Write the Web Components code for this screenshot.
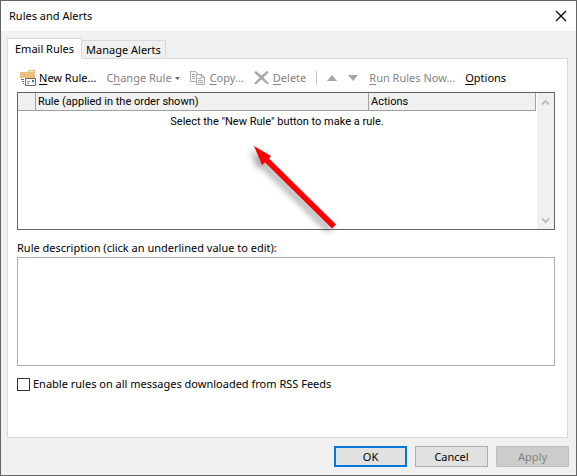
<!DOCTYPE html>
<html lang="en">
<head>
<meta charset="utf-8">
<title>Rules and Alerts</title>
<style>
  body {
    margin: 0;
    font: 11px/16px 'Noto Sans', 'Open Sans', sans-serif;
    color: #000;
  }
</style>
</head>
<body>
<rules-dialog></rules-dialog>

<script>
class ToolButton extends HTMLElement {
  constructor() {
    super();

    this.attachShadow({ mode: 'open' });

    this.shadowRoot.innerHTML = `
      <style>
        :host {
          display: block;
        }
        button {
          display: flex;
          align-items: center;
          gap: 3px;
          height: 20px;
          padding: 0;
          border: 0;
          background: none;
          font: inherit;
          color: #000;
          white-space: nowrap;
        }
        button:disabled {
          color: #838383;
        }
      </style>
      <button ${this.hasAttribute('disabled') ? 'disabled' : ''} aria-label="${this.getAttribute('label') || ''}">
        <slot name="icon"></slot><slot></slot><slot name="arrow"></slot>
      </button>
    `;
  }
}

class DialogButton extends HTMLElement {
  constructor() {
    super();

    this.attachShadow({ mode: 'open' });

    this.shadowRoot.innerHTML = `
      <style>
        :host {
          display: block;
          width: 73px;
        }
        button {
          width: 100%;
          height: 21px;
          padding: 0;
          border: 1px solid #adadad;
          background: #e1e1e1;
          font: inherit;
          line-height: 18px;
          color: #000;
        }
        :host([primary]) button {
          border: 2px solid #0078d7;
          line-height: 16px;
        }
        button:disabled {
          border-color: #bfbfbf;
          background: #ccc;
          color: #838383;
        }
      </style>
      <button ${this.hasAttribute('disabled') ? 'disabled' : ''}><slot></slot></button>
    `;
  }
}

class TitleBar extends HTMLElement {
  constructor() {
    super();

    this.attachShadow({ mode: 'open' });

    this.shadowRoot.innerHTML = `
      <style>
        :host {
          display: flex;
          align-items: center;
          justify-content: space-between;
          height: 30px;
          padding: 0 9px 0 8px;
          background: #fff;
        }
        h1 {
          margin: 0;
          font-size: 11px;
          font-weight: 400;
        }
        button {
          display: flex;
          padding: 0;
          border: 0;
          background: none;
        }
      </style>
      <h1><slot></slot></h1>
      <button aria-label="Close">
        <svg width="12" height="12" viewBox="0 0 12 12"><path d="M1 1l10 10M11 1L1 11" stroke="#000" stroke-width="1.2"/></svg>
      </button>
    `;
  }
}

class TabStrip extends HTMLElement {
  constructor() {
    super();

    this.attachShadow({ mode: 'open' });

    this.shadowRoot.innerHTML = `
      <style>
        :host {
          display: flex;
          align-items: flex-end;
          height: 21px;
          margin-bottom: -1px;
          position: relative;
        }
        button {
          height: 19px;
          padding: 0 4px;
          border: 1px solid #d9d9d9;
          border-left: 0;
          background: #f0f0f0;
          font: inherit;
          color: #000;
          line-height: 16px;
        }
        button[aria-selected="true"] {
          height: 21px;
          padding: 0 7px;
          border-left: 1px solid #d9d9d9;
          border-bottom-color: #fff;
          background: #fff;
        }
      </style>
      <button role="tab" aria-selected="true">Email Rules</button>
      <button role="tab" aria-selected="false">Manage Alerts</button>
    `;
    this.setAttribute('role', 'tablist');
  }
}

class RuleToolbar extends HTMLElement {
  constructor() {
    super();

    this.attachShadow({ mode: 'open' });

    this.shadowRoot.innerHTML = `
      <style>
        :host {
          display: flex;
          align-items: center;
          gap: 10px;
          padding: 0 3px;
        }
        svg {
          display: block;
        }
        u {
          text-underline-offset: 2px;
        }
        .line {
          width: 1px;
          height: 14px;
          background: #c6c6c6;
        }
      </style>
      <tool-button label="New Rule...">
        <svg slot="icon" width="16" height="16" viewBox="0 0 16 16">
          <path d="M0 2h7l2-2h6v8H0z" fill="#e8bf7c"/>
          <path d="M9 1.500h5" stroke="#f6e3c3"/>
          <path d="M1 9.500h3M2 11.500h2M3 13.500h1" stroke="#666"/>
          <path d="M5.500 8.500h10v7h-10z" fill="#fff" stroke="#666"/>
          <path d="M7 11.500h3M7 13.500h2" stroke="#888"/>
          <path d="M12 10h2v2h-2z" fill="#2b6cb0"/>
        </svg>
        <span><u>N</u>ew Rule...</span>
      </tool-button>
      <tool-button disabled label="Change Rule">
        <span>C<u>h</u>ange Rule</span>
        <svg slot="arrow" width="5" height="3" viewBox="0 0 5 3"><path d="M0 0h5L2.500 3z" fill="#666"/></svg>
      </tool-button>
      <tool-button disabled label="Copy...">
        <svg slot="icon" width="17" height="16" viewBox="0 0 17 16">
          <g fill="#f7f7f7" stroke="#aaa">
            <path d="M.5 1.500h5l2 2v8h-7z"/>
            <path d="M6.500 4.500h5l3 3v7h-8z"/>
            <path d="M11.500 4.500v3h3M2 4.500h3M2 6.500h3M2 8.500h3M8 8.500h3M8 10.500h5M8 12.500h5" fill="none"/>
          </g>
        </svg>
        <span><u>C</u>opy...</span>
      </tool-button>
      <tool-button disabled label="Delete">
        <svg slot="icon" width="16" height="14" viewBox="0 0 16 14">
          <path d="M0 1.500L2 0l5.500 4.500L13 0l2 1-5.500 5.500 5.500 6-1.500 1L7.500 8.500 2 13.500l-2-1 5.500-6z" fill="#aaa"/>
        </svg>
        <span><u>D</u>elete</span>
      </tool-button>
      <div class="line"></div>
      <tool-button disabled label="Move Up">
        <svg slot="icon" width="11" height="6" viewBox="0 0 11 6"><path d="M5 0l5 6H0z" fill="#a6a6a6"/></svg>
      </tool-button>
      <tool-button disabled label="Move Down">
        <svg slot="icon" width="11" height="6" viewBox="0 0 11 6"><path d="M0 0h10L5 6z" fill="#a6a6a6"/></svg>
      </tool-button>
      <tool-button disabled label="Run Rules Now..."><span><u>R</u>un Rules Now...</span></tool-button>
      <tool-button label="Options"><span><u>O</u>ptions</span></tool-button>
    `;
  }
}

class RuleList extends HTMLElement {
  constructor() {
    super();

    this.attachShadow({ mode: 'open' });

    this.shadowRoot.innerHTML = `
      <style>
        :host {
          display: flex;
          box-sizing: border-box;
          height: 138px;
          border: 1px solid #646464;
          position: relative;
          font-family: Roboto, sans-serif;
          font-size: 11px;
          background: #fff;
        }
        .rows {
          flex: 1;
        }
        table {
          width: 100%;
          table-layout: fixed;
          border-collapse: separate;
          border-spacing: 0;
        }
        th {
          height: 17px;
          padding: 0 0 0 2px;
          border-right: 1px solid #a0a0a0;
          border-bottom: 1px solid #a0a0a0;
          background: #f0f0f0;
          font-weight: 400;
          line-height: 16px;
          text-align: left;
        }
        .mark {
          width: 15px;
        }
        .actions {
          width: 164px;
        }
        td {
          padding: 3px 0;
          text-align: center;
        }
        .scroll {
          display: flex;
          flex-direction: column;
          justify-content: space-between;
          align-items: center;
          width: 17px;
          padding: 6px 0 5px;
          box-sizing: border-box;
          margin-left: 1px;
          background: #f0f0f0;
        }
        .pointer {
          position: absolute;
          left: 43%;
          top: 46px;
          overflow: visible;
        }
      </style>
      <div class="rows">
        <table>
          <thead>
            <tr><th class="mark"></th><th>Rule (applied in the order shown)</th><th class="actions">Actions</th></tr>
          </thead>
          <tbody>
            <tr><td colspan="3">Select the "New Rule" button to make a rule.</td></tr>
          </tbody>
        </table>
      </div>
      <div class="scroll">
        <svg width="9" height="7" viewBox="0 0 9 7"><path d="M1 5.500L4.500 2 8 5.500" fill="none" stroke="#bfbfbf" stroke-width="2"/></svg>
        <svg width="9" height="7" viewBox="0 0 9 7"><path d="M1 1.500L4.500 5 8 1.500" fill="none" stroke="#bfbfbf" stroke-width="2"/></svg>
      </div>
      <svg class="pointer" width="100" height="100" viewBox="0 0 100 100">
        <defs>
          <filter id="soft" x="-30%" y="-30%" width="160%" height="160%"><feGaussianBlur stdDeviation="3"/></filter>
        </defs>
        <path d="M6 7l17 10-2 2.500 67 66-4 4-67-66-3 2.500z" transform="translate(-4 4)" fill="#000" opacity=".35" filter="url(#soft)"/>
        <path d="M6 7l17 10-2 2.500 67 66-4 4-67-66-3 2.500z" fill="#f00"/>
      </svg>
    `;
  }
}

class RulesDialog extends HTMLElement {
  constructor() {
    super();

    this.attachShadow({ mode: 'open' });

    this.shadowRoot.innerHTML = `
      <style>
        :host {
          display: flex;
          flex-direction: column;
          box-sizing: border-box;
          min-height: 100vh;
          border: 1px solid #646464;
          background: #f0f0f0;
        }
        main {
          flex: 1;
          display: flex;
          flex-direction: column;
          padding: 7px 8px 8px 6px;
        }
        .panel {
          flex: 1;
          display: flex;
          flex-direction: column;
          padding: 9px 12px 9px 9px;
          border: 1px solid #d9d9d9;
          background: #fff;
        }
        rule-list {
          margin-top: 4px;
        }
        .caption {
          margin: 10px 0 1px;
        }
        textarea {
          display: block;
          box-sizing: border-box;
          width: 100%;
          height: 109px;
          border: 1px solid #abadb3;
          outline: 0;
          resize: none;
          font: inherit;
        }
        .check {
          display: flex;
          align-items: center;
          gap: 3px;
          margin-top: 10px;
        }
        input {
          appearance: none;
          width: 13px;
          height: 13px;
          margin: 0;
          border: 1px solid #333;
          background: #fff;
        }
        footer {
          display: flex;
          justify-content: flex-end;
          gap: 8px;
          padding: 0 7px 8px;
        }
      </style>
      <title-bar>Rules and Alerts</title-bar>
      <main>
        <tab-strip></tab-strip>
        <div class="panel">
          <rule-toolbar></rule-toolbar>
          <rule-list></rule-list>
          <label class="caption" for="description">Rule description (click an underlined value to edit):</label>
          <textarea id="description" readonly></textarea>
          <div class="check">
            <input type="checkbox" id="rss">
            <label for="rss">Enable rules on all messages downloaded from RSS Feeds</label>
          </div>
        </div>
      </main>
      <footer>
        <dialog-button primary>OK</dialog-button>
        <dialog-button>Cancel</dialog-button>
        <dialog-button disabled>Apply</dialog-button>
      </footer>
    `;
  }
}

customElements.define('tool-button', ToolButton);
customElements.define('dialog-button', DialogButton);
customElements.define('title-bar', TitleBar);
customElements.define('tab-strip', TabStrip);
customElements.define('rule-toolbar', RuleToolbar);
customElements.define('rule-list', RuleList);
customElements.define('rules-dialog', RulesDialog);
</script>
</body>
</html>
